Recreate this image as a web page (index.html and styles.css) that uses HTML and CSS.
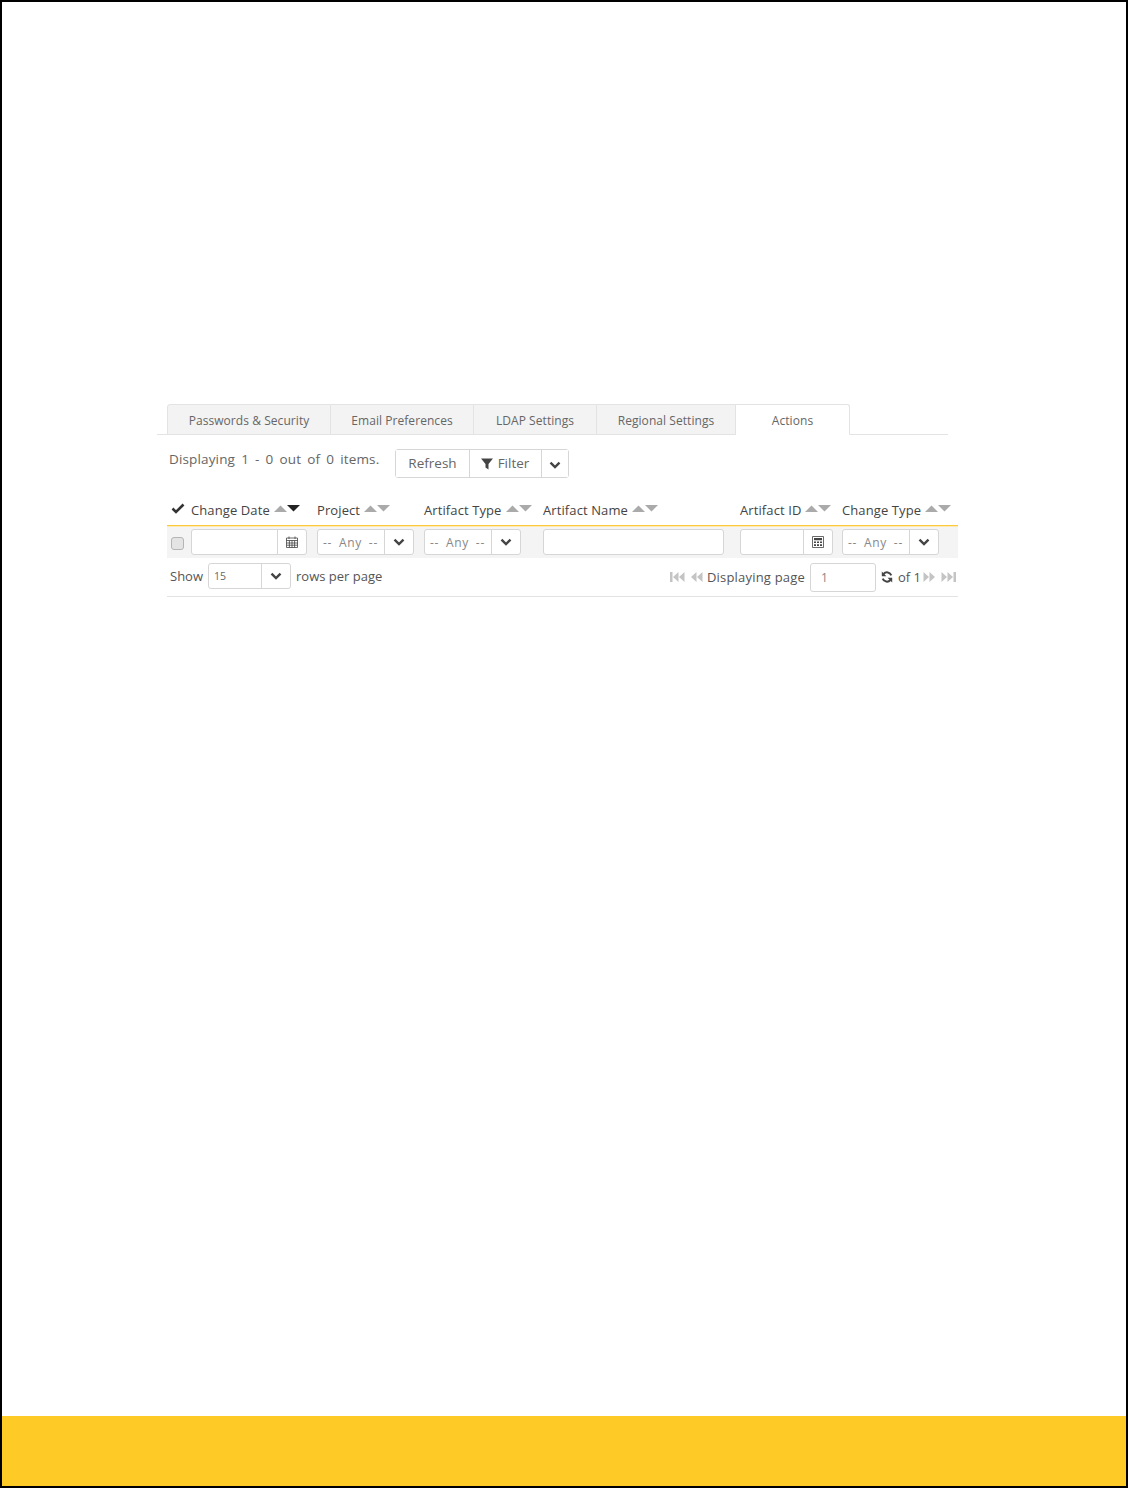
FILE: index.html
```html
<!DOCTYPE html>
<html lang="en">
<head>
<meta charset="utf-8">
<title>Actions</title>
<link rel="stylesheet" href="styles.css">
</head>
<body>
<svg class="defs" width="0" height="0" aria-hidden="true">
  <symbol id="chev" viewBox="0 0 12 8"><path d="M1.500 1.600 6 6l4.500-4.400" fill="none" stroke="currentColor" stroke-width="2.400"/></symbol>
  <symbol id="tri" viewBox="0 0 13 7"><path d="M0 0h13L6.500 6.500z" fill="currentColor"/></symbol>
  <symbol id="tru" viewBox="0 0 13 7"><path d="M0 7h13L6.500 .5z" fill="currentColor"/></symbol>
  <symbol id="first" viewBox="0 0 15 12"><path d="M0 1h2.500v10H0zM8.500 1v10L3 6zM14.500 1v10L9 6z" fill="currentColor"/></symbol>
  <symbol id="prev" viewBox="0 0 13 12"><path d="M6.500 1v10L1 6zM12.500 1v10L7 6z" fill="currentColor"/></symbol>
  <symbol id="next" viewBox="0 0 13 12"><path d="M.5 1v10L6 6zM6.500 1v10L12 6z" fill="currentColor"/></symbol>
  <symbol id="last" viewBox="0 0 15 12"><path d="M.5 1v10L6 6zM6.500 1v10L12 6zM12.500 1H15v10h-2.500z" fill="currentColor"/></symbol>
</svg>
<div class="frame">
  <main class="content">
    <nav class="tabs">
      <a class="tab tab-a">Passwords &amp; Security</a>
      <a class="tab tab-b">Email Preferences</a>
      <a class="tab tab-c">LDAP Settings</a>
      <a class="tab tab-d">Regional Settings</a>
      <a class="tab tab-e active">Actions</a>
    </nav>
    <div class="toolbar">
      <span class="summary">Displaying 1 - 0 out of 0 items.</span>
      <div class="btn-group">
        <button class="btn btn-refresh">Refresh</button>
        <button class="btn btn-filter"><svg class="i-filter" viewBox="0 0 12 12"><path d="M0 .5h12L7.500 6v5.500l-3-2V6z" fill="currentColor"/></svg>Filter</button>
        <button class="btn btn-more"><svg class="chev"><use href="#chev"/></svg></button>
      </div>
    </div>
    <div class="grid head">
      <div class="cell check-h"><svg class="i-check" viewBox="0 0 14 11"><path d="M1.500 5.500 5 9l7.500-7.500" fill="none" stroke="currentColor" stroke-width="2.600"/></svg></div>
      <div class="cell">Change Date<span class="arrows dark"><svg><use href="#tru"/></svg><svg class="on"><use href="#tri"/></svg></span></div>
      <div class="cell">Project<span class="arrows"><svg><use href="#tru"/></svg><svg><use href="#tri"/></svg></span></div>
      <div class="cell">Artifact Type<span class="arrows"><svg><use href="#tru"/></svg><svg><use href="#tri"/></svg></span></div>
      <div class="cell">Artifact Name<span class="arrows"><svg><use href="#tru"/></svg><svg><use href="#tri"/></svg></span></div>
      <div class="cell">Artifact ID<span class="arrows"><svg><use href="#tru"/></svg><svg><use href="#tri"/></svg></span></div>
      <div class="cell">Change Type<span class="arrows"><svg><use href="#tru"/></svg><svg><use href="#tri"/></svg></span></div>
    </div>
    <div class="grid filters">
      <div class="cell"><input class="chk" type="checkbox"></div>
      <div class="cell"><div class="ctl w-date"><span class="ctl-main"></span><span class="ctl-btn b-date"><svg class="i-cal" viewBox="0 0 12 12"><path d="M.5 2h11v9.500H.5zM.5 4.500h11M3 .5v2.500M9 .5v2.500M3.400 4.500v7M6 4.500v7M8.600 4.500v7M.5 7h11M.5 9.200h11" fill="none" stroke="currentColor" stroke-width=".8"/></svg></span></div></div>
      <div class="cell"><div class="ctl w-sel"><span class="ctl-main any">-- Any --</span><span class="ctl-btn b-sel"><svg class="chev"><use href="#chev"/></svg></span></div></div>
      <div class="cell"><div class="ctl w-sel"><span class="ctl-main any">-- Any --</span><span class="ctl-btn b-sel"><svg class="chev"><use href="#chev"/></svg></span></div></div>
      <div class="cell"><div class="ctl w-name"><span class="ctl-main"></span></div></div>
      <div class="cell"><div class="ctl w-id"><span class="ctl-main"></span><span class="ctl-btn b-id"><svg class="i-cal" viewBox="0 0 12 12"><path d="M.5.5h11v11H.5z" fill="none" stroke="currentColor" stroke-width=".8"/><path d="M2 2h8v2.200H2zM2 5.400h2V7H2zM5 5.400h2V7H5zM8 5.400h2V7H8zM2 8.200h2v1.800H2zM5 8.200h2v1.800H5zM8 8.200h2v1.800H8z" fill="currentColor"/></svg></span></div></div>
      <div class="cell"><div class="ctl w-sel"><span class="ctl-main any">-- Any --</span><span class="ctl-btn b-sel"><svg class="chev"><use href="#chev"/></svg></span></div></div>
    </div>
    <div class="pager">
      <div class="pager-left">
        <span>Show</span>
        <div class="ctl w-rows"><span class="ctl-main rows">15</span><span class="ctl-btn b-rows"><svg class="chev"><use href="#chev"/></svg></span></div>
        <span>rows per page</span>
      </div>
      <div class="pager-right">
        <svg class="nav n15"><use href="#first"/></svg>
        <svg class="nav n13"><use href="#prev"/></svg>
        <span class="lbl">Displaying page</span>
        <span class="page-input">1</span>
        <svg class="i-refresh" viewBox="0 0 12 12"><path d="M10.300 4.300A4.500 4.500 0 0 0 2.600 3M1.700 7.700A4.500 4.500 0 0 0 9.400 9" fill="none" stroke="currentColor" stroke-width="2"/><path d="M.8.600v4.600h4.600zM11.200 11.400V6.800H6.600z" fill="currentColor"/></svg>
        <span class="of">of 1</span>
        <svg class="nav n13"><use href="#next"/></svg>
        <svg class="nav n15"><use href="#last"/></svg>
      </div>
    </div>
  </main>
  <footer class="band"></footer>
</div>
</body>
</html>
```
FILE: styles.css
```css
* { box-sizing: border-box; }
html, body { margin: 0; padding: 0; }
body { background: #fff; font-family: "Open Sans", "Noto Sans", sans-serif; color: #555; }
.defs { display: block; height: 0; }
.frame { height: 1488px; border: 2px solid #000; display: flex; flex-direction: column; }
.content { flex: 1; padding: 402px 0 0 165px; width: 800px; }

.tabs { display: flex; height: 31px; margin-left: -10px; width: 791px; padding-left: 10px; border-bottom: 1px solid #e3e3e3; }
.tab { display: flex; align-items: center; justify-content: center; height: 31px; padding-top: 1px; background: #f3f3f3; border: 1px solid #e3e3e3; border-left-width: 0; font-size: 12px; letter-spacing: .06px; color: #666; }
.tab-a { width: 164px; border-left-width: 1px; border-radius: 3px 0 0 0; }
.tab-b { width: 143px; }
.tab-c { width: 123px; }
.tab-d { width: 139px; }
.tab-e { width: 114px; background: #fff; border-bottom-color: #fff; border-radius: 0 3px 0 0; }

.toolbar { display: flex; align-items: flex-start; padding: 14px 0 0 2px; height: 65px; }
.summary { font-size: 13.500px; width: 226px; line-height: 20px; letter-spacing: .15px; word-spacing: 2.400px; color: #666; }
.btn-group { display: flex; height: 29px; border: 1px solid #d6d6d6; border-radius: 3px; }
.btn { display: flex; align-items: center; justify-content: center; background: #fff; border: 0; border-left: 1px solid #d6d6d6; padding: 0 0 2px; font: 13.500px "Open Sans", sans-serif; color: #666; }
.btn-refresh { width: 73px; border-left: 0; }
.btn-filter { width: 72px; gap: 5px; padding-right: 1px; }
.btn-more { width: 27px; color: #444; padding: 2px 0 0; }
.i-filter { width: 12px; height: 12px; color: #444; margin-top: 2px; }
.chev { width: 12px; height: 8px; display: block; }

.grid { display: grid; grid-template-columns: 24px 126px 107px 119px 197px 102px 116px; width: 791px; }
.head { height: 25px; font-size: 13px; letter-spacing: .1px; color: #444; align-items: start; }
.head .cell { display: flex; align-items: center; height: 20px; }
.check-h { padding-left: 4px; }
.i-check { width: 14px; height: 11px; color: #333; margin-top: -3px; }
.arrows { display: flex; gap: 0; margin-left: 4px; margin-top: -4px; color: #aaa; }
.arrows svg { width: 13px; height: 7px; display: block; }
.arrows .on { color: #222; }

.filters { height: 33px; background: #f4f4f4; border-top: 1px solid #fcc93a; box-shadow: inset 0 1px #fdeab5; align-items: center; }
.filters .chk { appearance: none; margin: 2px 0 0 4px; width: 13px; height: 13px; display: block; background: #e4e4e4; border: 1px solid #b5b5b5; border-radius: 3px; }
.ctl { display: flex; height: 26px; background: #fff; border: 1px solid #d6d6d6; border-radius: 3px; }
.ctl-main { flex: 1; display: flex; align-items: center; padding-left: 5px; font-size: 12px; color: #888; }
.any { letter-spacing: .7px; word-spacing: 3px; white-space: pre; }
.ctl-btn { display: flex; align-items: center; justify-content: center; border-left: 1px solid #d6d6d6; color: #444; }
.w-date { width: 116px; }
.b-date { width: 29px; }
.w-sel { width: 97px; }
.b-sel { width: 29px; }
.w-name { width: 181px; }
.w-id { width: 93px; }
.b-id { width: 29px; }
.i-cal { width: 12px; height: 12px; }

.pager { width: 791px; height: 39px; border-bottom: 1px solid #e3e3e3; display: flex; justify-content: space-between; align-items: center; font-size: 13px; padding: 1px 2px 0 3px; }
.pager-left { display: flex; align-items: center; gap: 5px; margin-top: -4px; }
.w-rows { width: 83px; height: 26px; }
.rows { font-size: 10.500px; color: #666; padding-left: 5px; }
.b-rows { width: 29px; }
.pager-right { display: flex; align-items: center; }
.nav { height: 12px; color: #c4c4c4; display: block; margin-bottom: 2px; }
.n15 { width: 15px; }
.n13 { width: 13px; }
.n15 + .n13 { margin-left: 5px; }
.n13 + .n15 { margin-left: 5px; }
.lbl { margin-left: 4px; letter-spacing: .2px; padding-bottom: 2px; }
.page-input { width: 66px; height: 29px; margin: 0 5px; padding-left: 10px; display: flex; align-items: center; background: #fff; border: 1px solid #d6d6d6; border-radius: 3px; font-size: 12px; color: #888; }
.i-refresh { width: 12px; height: 12px; color: #444; margin-bottom: 2px; }
.of { margin: 0 2px 0 5px; padding-bottom: 2px; }
.band { height: 70px; background: #fdca26; }
```
